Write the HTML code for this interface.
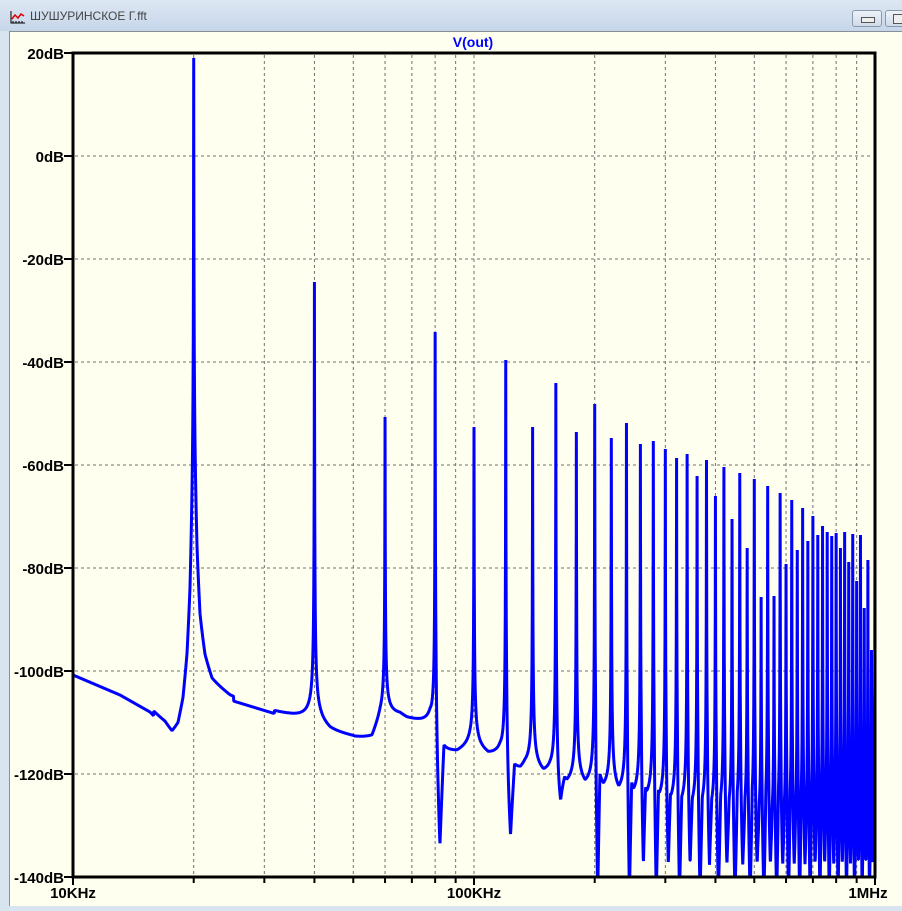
<!DOCTYPE html>
<html><head><meta charset="utf-8"><style>
html,body{margin:0;padding:0;width:902px;height:911px;overflow:hidden;background:#d9e4f1;font-family:"Liberation Sans",sans-serif}
#tb{position:absolute;left:0;top:0;width:902px;height:31px;background:linear-gradient(#dde7f3,#c6d6ea)}
#tt{position:absolute;left:30px;top:9px;font-size:12px;color:#444}
#client{position:absolute;left:9px;top:31px;width:893px;height:874px;background:#fffff0;border-top:1px solid #8a8f96;border-left:1px solid #8a8f96}
.btn{position:absolute;top:10px;width:28px;height:15px;border:1px solid #8a98ab;border-radius:3px;background:linear-gradient(#eef3f9,#cfdbe9)}
</style></head><body>
<div id="tb">
<svg style="position:absolute;left:10px;top:10px" width="16" height="14"><path d="M1 1V13H15" stroke="#000" fill="none"/><path d="M2 9L5 5L8 8L11 4L14 6" stroke="#d00" stroke-width="1.5" fill="none"/><path d="M3 13V11M6 13V11M9 13V11M12 13V11" stroke="#000"/></svg>
<div id="tt">ШУШУРИНСКОЕ Г.fft</div>
<div class="btn" style="left:852px"><div style="position:absolute;left:8px;top:6px;width:12px;height:4px;border:1px solid #555;background:#eee"></div></div>
<div class="btn" style="left:885px"><div style="position:absolute;left:7px;top:3px;width:12px;height:8px;border:1px solid #555;background:#eee"></div></div>
</div>
<div id="client"></div>
<svg id="plot" style="position:absolute;left:0;top:0" width="902" height="911" font-family="Liberation Sans, sans-serif">
<defs><clipPath id="c"><rect x="73" y="53" width="802" height="824"/></clipPath></defs>
<g id="grid" stroke="#707070" stroke-width="1" stroke-dasharray="3,3"></g>
<text x="473" y="47" fill="#0000ff" font-size="14" font-weight="bold" text-anchor="middle">V(out)</text>
<g id="labels" font-size="15" font-weight="bold" fill="#000"></g>
<path id="curve" clip-path="url(#c)" fill="none" stroke="#0000ff" stroke-width="3" stroke-linejoin="bevel"/>
<rect x="73" y="53" width="802" height="824" fill="none" stroke="#000" stroke-width="3"/>
<g id="ticks" stroke="#000" stroke-width="2"></g>
</svg>
<script>
var NS="http://www.w3.org/2000/svg";
function el(p,t,a,txt){var e=document.createElementNS(NS,t);for(var k in a)e.setAttribute(k,a[k]);if(txt)e.textContent=txt;document.getElementById(p).appendChild(e);}
var X0=73,D=401,Y0=53,DY=103;
for(var d=0;d<2;d++)for(var m=2;m<=10;m++){var x=X0+D*(d+Math.log10(m));if(x<874){el('grid','line',{x1:x,y1:55,x2:x,y2:875});el('ticks','line',{x1:x,y1:877,x2:x,y2:883});}}
for(var i=1;i<8;i++){var y=Y0+DY*i;el('grid','line',{x1:75,y1:y,x2:873,y2:y});}
var dbl=["20dB","0dB","-20dB","-40dB","-60dB","-80dB","-100dB","-120dB","-140dB"];
for(var i=0;i<9;i++){var y=Y0+DY*i;el('labels','text',{x:64,y:y+6,'text-anchor':'end'},dbl[i]);el('ticks','line',{x1:64,y1:y,x2:73,y2:y});}
el('ticks','line',{x1:X0,y1:877,x2:X0,y2:885});el('ticks','line',{x1:474,y1:877,x2:474,y2:885});el('ticks','line',{x1:875,y1:877,x2:875,y2:885});
el('labels','text',{x:73,y:898,'text-anchor':'middle'},"10KHz");
el('labels','text',{x:474,y:898,'text-anchor':'middle'},"100KHz");
el('labels','text',{x:868,y:898,'text-anchor':'middle'},"1MHz");
var tops=[0,58,282,417,332,427,360,427,383,432,404,438,423,444,441,449,458,454,476,460,496,467,519,473,548,479,597,486,596,493,564,500,550,508,541,516,535,526,532,536,533,548,532,562,534,581,535,608,560,650,540];
var bp=[[73,675],[120,695],[150,712],[165,728],[172,740],[178,735],[183,715],[187,680],[190,630],[194,500],[197,590],[200,640],[205,670],[212,688],[230,700],[312,725],[330,735],[372,742],[380,725],[386,720],[400,718],[430,730],[440,760],[470,752],[500,762],[510,780],[525,772],[550,780],[560,790],[580,790],[620,800],[660,810],[700,820],[760,835],[800,850],[875,860]];
function base(x){for(var i=1;i<bp.length;i++)if(x<=bp[i][0]){var a=bp[i-1],b=bp[i];return a[1]+(b[1]-a[1])*(x-a[0])/(b[0]-a[0]);}return 860;}
function notch(n){if(n<4)return 0;if(n==4)return 845;if(n==6)return 835;if(n==8)return 800;if(n==5||n==7||n==9)return 0;if(n%2==0)return 895;return n>=13?865:0;}
var xs=[];for(var x=73;x<=876;x+=0.25)xs.push(x);
for(var n=1;n<=50;n++)xs.push(X0+D*Math.log10(2*n));
xs.sort(function(a,b){return a-b});
var pts=[];
for(var k=0;k<xs.length;k++){var x=xs[k];
 var y=base(x);
 for(var n=1;n<=50;n++){var xn=X0+D*Math.log10(2*n);var dx=Math.abs(x-xn);if(dx>40)continue;var g=1/(1+dx/0.3);var b=base(x);var yy=b-(b-tops[n])*g; if(yy<y)y=yy;}
 for(var n=4;n<=50;n++){var nd=notch(n);if(!nd)continue;var xn=X0+D*Math.log10(2*n);var sp=D*Math.log10((n+1)/n);var dx=x-xn;var w=Math.min(n<10?4:2.2,sp*0.3);var o=Math.min(0.8,sp*0.15);if(dx>o&&dx<o+2*w){var t=1-Math.abs(dx-o-w)/w;y=y+(nd-y)*t;}}
 pts.push(x.toFixed(2)+","+y.toFixed(1));
}
document.getElementById('curve').setAttribute('d',"M"+pts.join("L"));
</script>
</body></html>
